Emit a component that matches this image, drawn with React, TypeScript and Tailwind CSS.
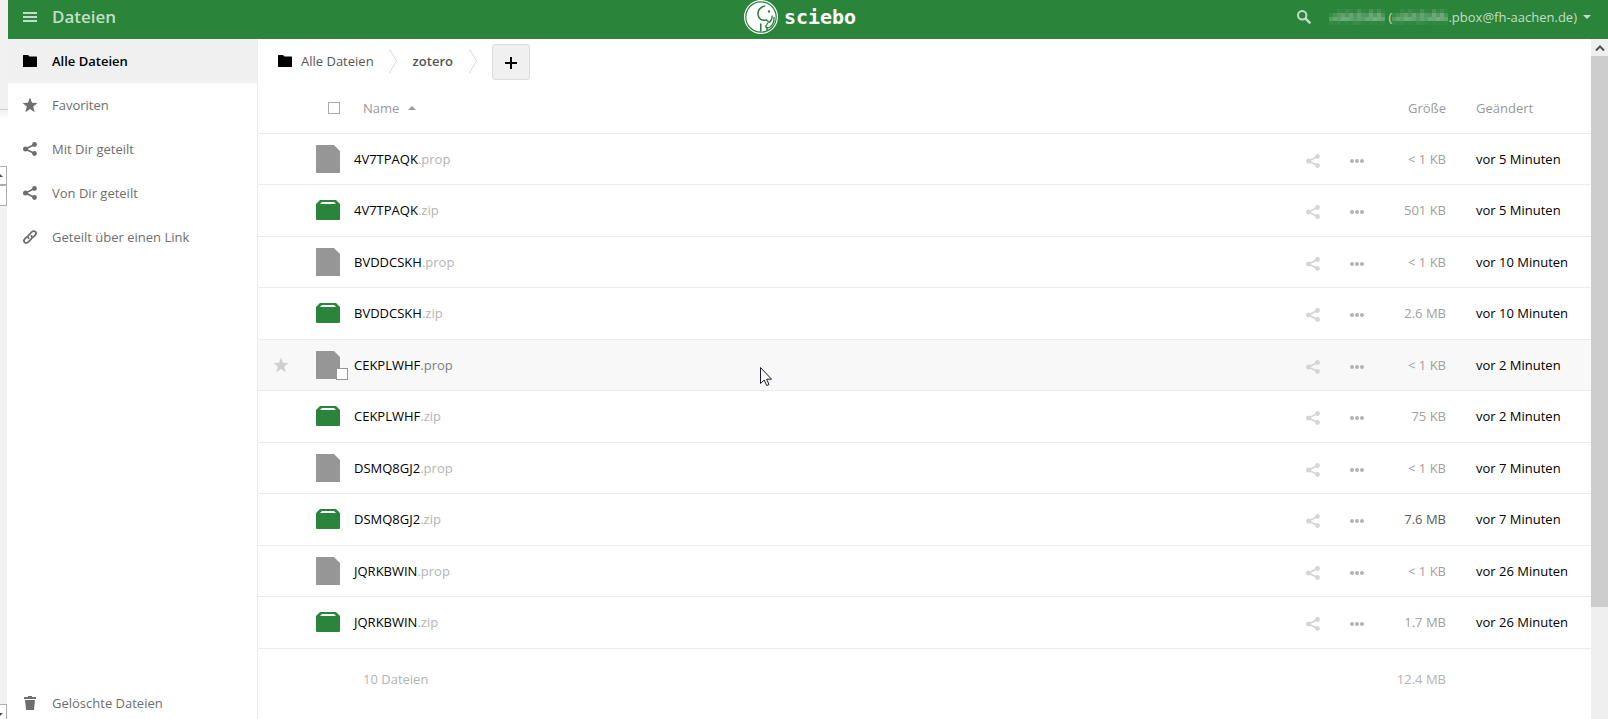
import type { ReactNode } from "react";

type FileKind = "prop" | "zip";

interface FileEntry {
  name: string;
  kind: FileKind;
  size: string;
  modified: string;
  hovered?: boolean;
  large?: boolean;
}

const FILES: FileEntry[] = [
  { name: "4V7TPAQK", kind: "prop", size: "< 1 KB", modified: "vor 5 Minuten" },
  { name: "4V7TPAQK", kind: "zip", size: "501 KB", modified: "vor 5 Minuten" },
  { name: "BVDDCSKH", kind: "prop", size: "< 1 KB", modified: "vor 10 Minuten" },
  { name: "BVDDCSKH", kind: "zip", size: "2.6 MB", modified: "vor 10 Minuten" },
  { name: "CEKPLWHF", kind: "prop", size: "< 1 KB", modified: "vor 2 Minuten", hovered: true },
  { name: "CEKPLWHF", kind: "zip", size: "75 KB", modified: "vor 2 Minuten" },
  { name: "DSMQ8GJ2", kind: "prop", size: "< 1 KB", modified: "vor 7 Minuten" },
  { name: "DSMQ8GJ2", kind: "zip", size: "7.6 MB", modified: "vor 7 Minuten", large: true },
  { name: "JQRKBWIN", kind: "prop", size: "< 1 KB", modified: "vor 26 Minuten" },
  { name: "JQRKBWIN", kind: "zip", size: "1.7 MB", modified: "vor 26 Minuten" },
];

function FolderIcon() {
  return (
    <svg viewBox="0 0 14 12" className="h-3 w-3.5 shrink-0" fill="currentColor" aria-hidden="true">
      <path d="M.5 0H5l1.5 1.5h7a.5.5 0 0 1 .5.5v9.500a.5.5 0 0 1-.5.5H.5a.5.5 0 0 1-.5-.5V.5A.5.5 0 0 1 .5 0z" />
    </svg>
  );
}

function StarIcon() {
  return (
    <svg viewBox="0 0 16 16" className="h-4 w-4 shrink-0" fill="currentColor" aria-hidden="true">
      <path d="M8 .5l2 5.300 5.500.3-4.300 3.500 1.500 5.600L8 12.100l-4.700 3.100 1.500-5.600L.5 6.100 6 5.800z" />
    </svg>
  );
}

function ShareIcon() {
  return (
    <svg viewBox="0 0 14 14" className="h-3.5 w-3.5 shrink-0" fill="currentColor" aria-hidden="true">
      <path d="M11.500 2.500L2.500 7l9 4.500" fill="none" stroke="currentColor" strokeWidth="1.800" />
      <circle cx="11.500" cy="2.500" r="2.400" />
      <circle cx="2.500" cy="7" r="2.500" />
      <circle cx="11.500" cy="11.500" r="2.400" />
    </svg>
  );
}

function LinkIcon() {
  return (
    <svg
      viewBox="0 0 14 14"
      className="h-3.5 w-3.5 shrink-0"
      fill="none"
      stroke="currentColor"
      strokeWidth="1.800"
      strokeLinecap="round"
      aria-hidden="true"
    >
      <path d="M5.600 8.200C4.700 7.200 4.900 6 5.700 5.200L8.800 2C9.900.8 11.400.8 12.300 1.700c.9.900.9 2.300-.1 3.400L10.400 7" />
      <path d="M8.400 5.800c.9 1 .7 2.200-.1 3L5.200 12c-1.100 1.200-2.600 1.200-3.500.3-.9-.9-.9-2.300.1-3.400L3.600 7" />
    </svg>
  );
}

function TrashIcon() {
  return (
    <svg viewBox="0 0 14 14" className="h-3.5 w-3.5 shrink-0" fill="currentColor" aria-hidden="true">
      <path d="M5 0h4v1h3.500a.5.500 0 0 1 .5.500V3H1V1.500A.5.500 0 0 1 1.500 1H5zM2 4h10l-1 9.500a.5.500 0 0 1-.5.500h-7a.5.500 0 0 1-.5-.5z" />
    </svg>
  );
}

function FileIcon({ kind }: { kind: FileKind }) {
  if (kind === "zip") {
    return (
      <svg viewBox="0 0 24 20" className="h-5 w-6 shrink-0" aria-hidden="true">
        <path d="M4 0h16l4 4v15a1 1 0 0 1-1 1H1a1 1 0 0 1-1-1V4z" fill="#2a853b" />
        <path d="M6 2h12l2 2H4z" fill="#fff" />
      </svg>
    );
  }
  return (
    <svg viewBox="0 0 24 28" className="h-7 w-6 shrink-0" aria-hidden="true">
      <path d="M.5 0H18l6 6v21.500a.5.500 0 0 1-.5.500H.5a.5.500 0 0 1-.5-.5V.5A.5.500 0 0 1 .5 0z" fill="#969696" />
    </svg>
  );
}

function ScieboMark() {
  return (
    <svg viewBox="0 0 34 34" className="h-[34px] w-[34px] shrink-0" aria-hidden="true">
      <circle cx="17" cy="17" r="17" fill="#fff" />
      <circle cx="17" cy="17" r="15.200" fill="none" stroke="#2a853b" strokeWidth="1.200" />
      <g fill="none" stroke="#2a853b" strokeWidth="1.600" strokeLinecap="round">
        <path d="M20.500 6c-4.500 1.500-7 5-6.400 9.200.6 3.600 3.600 5.800 8.400 4.800" />
        <path d="M22.500 20l2.700 2.500c2-1.500 3-3.700 3-6.500" strokeWidth="1.300" />
        <path d="M30 17.500c.3 4-1.200 7.500-4 9.500-1.500 1-3.500.8-4.500-.3l2.300-3.700" strokeWidth="1.300" />
        <path d="M16.800 24v7" />
        <path d="M23 28v2" />
      </g>
      <circle cx="25" cy="11.500" r="1.200" fill="#2a853b" />
    </svg>
  );
}

// Opacity of each 4px cell, row by row
const MASK_CELLS = [
  [0, 0, 0.05, 0.02, 0.08, 0.04, 0.02, 0.12, 0.03, 0.02, 0.14, 0.04, 0.1, 0.03],
  [0.08, 0.14, 0.2, 0.24, 0.16, 0.28, 0.16, 0.26, 0.18, 0.16, 0.3, 0.2, 0.3, 0.14],
  [0.2, 0.28, 0.24, 0.32, 0.3, 0.26, 0.2, 0.26, 0.22, 0.3, 0.28, 0.34, 0.3, 0.26],
  [0.06, 0.03, 0.06, 0.02, 0.04, 0.02, 0.08, 0.06, 0.03, 0.02, 0.04, 0.03, 0.02, 0.04],
];

function MaskedName() {
  return (
    <svg viewBox="0 0 56 16" className="h-4 w-14 shrink-0" role="img" aria-label="Name verborgen">
      {MASK_CELLS.map((row, y) =>
        row.map((opacity, x) => (
          <rect key={`${x}-${y}`} x={x * 4} y={y * 4} width="4" height="4" fill="#fff" opacity={opacity} />
        )),
      )}
    </svg>
  );
}

function CrumbArrow() {
  return (
    <svg viewBox="0 0 8 24" className="h-6 w-2 shrink-0" fill="none" stroke="#d9d9d9" aria-hidden="true">
      <path d="M.5 0l7 12-7 12" />
    </svg>
  );
}

function NavItem({ icon, label, active = false }: { icon: ReactNode; label: string; active?: boolean }) {
  return (
    <a
      href="#"
      className={`flex h-11 items-center pl-3.5 ${
        active ? "bg-[#f0f0f0] font-semibold text-black" : "text-[#6e6e6e]"
      }`}
    >
      <span className="mr-3.5 flex w-4 justify-center">{icon}</span>
      {label}
    </a>
  );
}

function Header() {
  return (
    <header className="grid h-[39px] shrink-0 grid-cols-[1fr_auto_1fr] items-center bg-[#2a853b] pb-1.5 text-[#c3dec8]">
      <button type="button" className="flex items-center justify-self-start pl-[15px] text-[17px] leading-6 font-semibold">
        <svg viewBox="0 0 14 10" className="mr-[15px] h-2.5 w-3.5" fill="currentColor" aria-hidden="true">
          <path d="M0 0h14v2H0zM0 4h14v2H0zM0 8h14v2H0z" />
        </svg>
        Dateien
      </button>
      <a href="#" className="flex h-8 items-center gap-1.5 pr-4 text-white">
        <ScieboMark />
        <span className="font-['DejaVu_Sans_Mono',monospace] text-xl leading-6 font-bold">sciebo</span>
      </a>
      <div className="flex items-center justify-self-end pr-[17px]">
        <button type="button" aria-label="Suchen" className="mr-[18px]">
          <svg viewBox="0 0 14 14" className="h-3.5 w-3.5" fill="none" stroke="currentColor" aria-hidden="true">
            <circle cx="5.200" cy="5.200" r="4.200" strokeWidth="2" />
            <path d="M8.300 8.300l5 5" strokeWidth="2.400" />
          </svg>
        </button>
        <button type="button" className="flex items-center text-[13px] leading-5">
          <MaskedName />
          <span className="ml-1">(</span>
          <MaskedName />
          <span>.pbox@fh-aachen.de)</span>
          <svg viewBox="0 0 8 4" className="ml-1.5 h-1 w-2" fill="currentColor" aria-hidden="true">
            <path d="M0 0h8L4 4z" />
          </svg>
        </button>
      </div>
    </header>
  );
}

function Sidebar() {
  return (
    <nav className="flex w-[250px] shrink-0 flex-col justify-between border-r border-[#ebebeb] bg-white">
      <div>
        <NavItem icon={<FolderIcon />} label="Alle Dateien" active />
        <NavItem icon={<StarIcon />} label="Favoriten" />
        <NavItem icon={<ShareIcon />} label="Mit Dir geteilt" />
        <NavItem icon={<ShareIcon />} label="Von Dir geteilt" />
        <NavItem icon={<LinkIcon />} label="Geteilt über einen Link" />
      </div>
      <div className="-mb-1.5">
        <NavItem icon={<TrashIcon />} label="Gelöschte Dateien" />
      </div>
    </nav>
  );
}

function Breadcrumbs() {
  return (
    <div className="flex h-11 items-center pl-5 text-[#555]">
      <a href="#" className="flex items-center">
        <span className="text-black">
          <FolderIcon />
        </span>
        <span className="ml-[9px]">Alle Dateien</span>
      </a>
      <span className="ml-[15px]">
        <CrumbArrow />
      </span>
      <a href="#" className="ml-4 font-semibold">
        zotero
      </a>
      <span className="ml-4">
        <CrumbArrow />
      </span>
      <button
        type="button"
        aria-label="Neu"
        className="mt-0.5 ml-[15px] flex h-9 w-[38px] items-center justify-center rounded-[3px] border border-[#dcdcdc] bg-[#f0f0f0] pt-0.5"
      >
        <svg viewBox="0 0 12 12" className="h-3 w-3" aria-hidden="true">
          <path d="M5 0h2v5h5v2H7v5H5V7H0V5h5z" />
        </svg>
      </button>
    </div>
  );
}

function FileRow({ file }: { file: FileEntry }) {
  const { name, kind, size, modified, hovered, large } = file;
  const fullName = `${name}.${kind}`;

  return (
    <tr className={`border-b border-[#ebebeb] ${kind === "zip" ? "h-[52px]" : "h-[51px]"} ${hovered ? "bg-[#f8f8f8]" : ""}`}>
      <td className="pl-[15px]">
        {hovered ? (
          <button type="button" aria-label={`${fullName} favorisieren`} className="flex text-[#cfcfcf]">
            <StarIcon />
          </button>
        ) : null}
      </td>
      <td>
        <div className="flex items-center">
          <span className="relative flex">
            <FileIcon kind={kind} />
            {hovered ? (
              <input
                type="checkbox"
                aria-label={`${fullName} auswählen`}
                className="absolute -right-2 -bottom-px h-3 w-3 appearance-none border border-[#969696] bg-white"
              />
            ) : null}
          </span>
          <a href="#" className="ml-3.5 text-black">
            {name}
            <span className={hovered ? "text-[#808080]" : "text-[#b4b4b4]"}>.{kind}</span>
          </a>
        </div>
      </td>
      <td>
        <div className="flex items-center gap-[30px] pt-1">
          <button type="button" aria-label={`${fullName} teilen`} className="text-[#d5d5d5]">
            <ShareIcon />
          </button>
          <button type="button" aria-label={`Aktionen für ${fullName}`} className="text-[#b3b3b3]">
            <svg viewBox="0 0 14 4" className="h-1 w-3.5" fill="currentColor" aria-hidden="true">
              <circle cx="2" cy="2" r="2" />
              <circle cx="7" cy="2" r="2" />
              <circle cx="12" cy="2" r="2" />
            </svg>
          </button>
        </div>
      </td>
      <td className={`text-right ${large ? "text-[#5c5c5c]" : "text-[#a0a0a0]"}`}>{size}</td>
      <td className="pl-[30px] text-black">{modified}</td>
    </tr>
  );
}

function FileTable() {
  return (
    <table className="w-full table-fixed border-collapse whitespace-nowrap">
      <colgroup>
        <col className="w-[58px]" />
        <col />
        <col className="w-[70px]" />
        <col className="w-[70px]" />
        <col className="w-[145px]" />
      </colgroup>
      <thead>
        <tr className="h-[50px] border-b border-[#ebebeb] text-left text-[#999]">
          <th />
          <th className="font-normal">
            <div className="flex items-center pl-3">
              <input
                type="checkbox"
                aria-label="Alle auswählen"
                className="h-3 w-3 appearance-none border border-[#aaa] bg-white"
              />
              <button type="button" className="ml-[23px] flex items-center">
                Name
                <svg viewBox="0 0 8 4" className="ml-[9px] h-1 w-2" fill="currentColor" aria-hidden="true">
                  <path d="M4 0l4 4H0z" />
                </svg>
              </button>
            </div>
          </th>
          <th />
          <th className="text-right font-normal">
            <button type="button">Größe</button>
          </th>
          <th className="pl-[30px] font-normal">
            <button type="button">Geändert</button>
          </th>
        </tr>
      </thead>
      <tbody>
        {FILES.map((file) => (
          <FileRow key={`${file.name}.${file.kind}`} file={file} />
        ))}
      </tbody>
      <tfoot>
        <tr className="h-[62px] text-[#b3b3b3]">
          <td />
          <td className="pl-[47px]">10 Dateien</td>
          <td />
          <td className="text-right">12.4 MB</td>
          <td />
        </tr>
      </tfoot>
    </table>
  );
}

function Scrollbar() {
  return (
    <div className="flex w-[17px] shrink-0 flex-col bg-[#efefef]" aria-hidden="true">
      <div className="flex h-[17px] shrink-0 items-center justify-center">
        <svg viewBox="0 0 10 6" className="h-1.5 w-2.5" fill="none" stroke="#505050" strokeWidth="2">
          <path d="M1 5.500l4-4 4 4" />
        </svg>
      </div>
      <div className="h-[81%] bg-[#cdcdcd]" />
    </div>
  );
}

// Edge of the window that lies behind the browser
function WindowEdge() {
  return (
    <div className="flex w-2 shrink-0 flex-col overflow-hidden bg-white" aria-hidden="true">
      <div className="h-[110px] shrink-0 border-b border-[#cfcfcf] bg-[#f3f1f0]" />
      <div className="h-14 shrink-0 bg-linear-to-b from-[#f0f0f0] to-white to-15%" />
      <div className="flex h-[19px] w-[7px] shrink-0 items-center border-y border-r border-[#adadad]">
        <svg viewBox="0 0 3 3" className="h-[3px] w-[3px]">
          <path d="M0 0l3 3H0z" fill="#505050" />
        </svg>
      </div>
      <div className="h-[21px] w-[7px] shrink-0 border-y border-r border-[#adadad]" />
      <div className="w-[7px] flex-1 bg-[#f1f1f1]" />
      <div className="flex h-[15px] w-[7px] shrink-0 items-center border-t border-r border-[#adadad] pt-1">
        <svg viewBox="0 0 3 3" className="h-[3px] w-[3px]">
          <path d="M0 0h3L0 3z" fill="#505050" />
        </svg>
      </div>
    </div>
  );
}

export default function App() {
  return (
    <div className="relative flex h-screen overflow-hidden bg-white font-['Open_Sans',sans-serif] text-[13px] leading-5">
      <WindowEdge />
      <div className="flex min-w-0 flex-1 flex-col">
        <Header />
        <div className="flex min-h-0 flex-1">
          <Sidebar />
          <main className="min-w-0 flex-1">
            <Breadcrumbs />
            <FileTable />
          </main>
          <Scrollbar />
        </div>
      </div>
      <svg viewBox="0 0 12 19" className="pointer-events-none absolute top-[367px] left-[760px] h-[19px] w-3" aria-hidden="true">
        <path
          d="M.5.5v16l3.700-3.500 2.500 5.500 2.300-1-2.400-5.300h4.900z"
          fill="#fff"
          stroke="#1b1b2b"
          strokeLinejoin="round"
        />
      </svg>
    </div>
  );
}
